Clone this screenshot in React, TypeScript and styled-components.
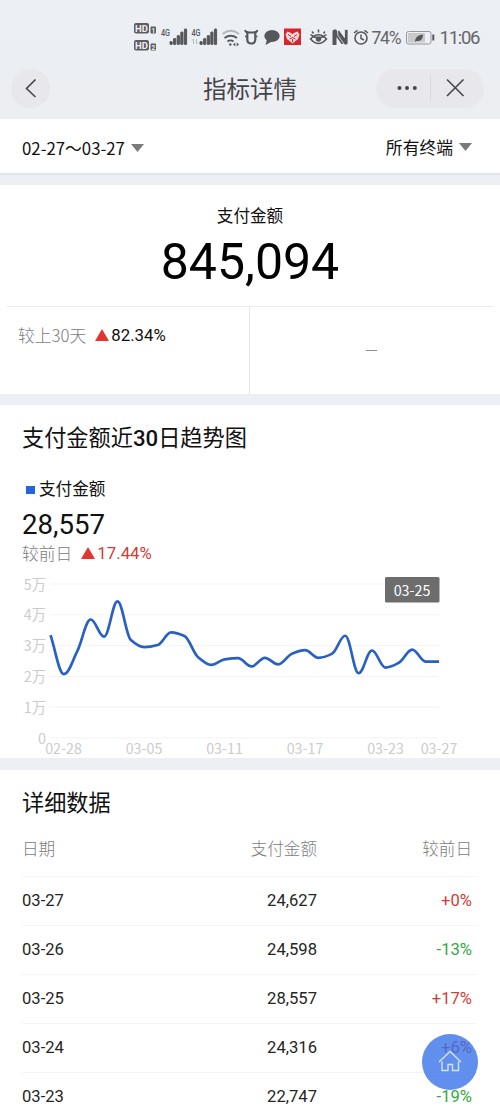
import React from 'react';
import styled, { createGlobalStyle } from 'styled-components';

const Global = createGlobalStyle`
  * { box-sizing: border-box; }
  body { margin: 0; background: #fff; }
`;
const Page = styled.main`
  width: 500px;
  height: 1111px;
  overflow: hidden;
  background: #eeeff4;
  color: #111;
  font-family: Roboto, "Noto Sans CJK SC", sans-serif;
  font-size: 16.6px;
`;
const Header = styled.header`
  height: 119px;
  background: linear-gradient(#eceff3, #ebeef2 60%, #edeef2);
`;
const StatusBar = styled.div`
  height: 59px;
  padding: 17px 0 0 132px;
`;
const StatusIcons = styled.svg`
  display: block;
  width: 368px;
  height: 40px;
  font-family: Roboto, sans-serif;
`;
const NavBar = styled.div`
  height: 59px;
  display: grid;
  grid-template-columns: 1fr 160px 1fr;
  align-items: center;
  padding: 0 16px 0 11px;
`;
const BackButton = styled.button`
  width: 39px;
  height: 39px;
  padding: 0;
  border: 0;
  border-radius: 50%;
  background: #e8e7ec;
  display: grid;
  place-items: center;
`;
const Title = styled.h1`
  margin: 0 -5px 0 0;
  padding-top: 2px;
  text-align: center;
  color: #444548;
  font-size: 23.5px;
  font-weight: 400;
  line-height: 34px;
`;
const Capsule = styled.div`
  justify-self: end;
  width: 108px;
  height: 39px;
  border-radius: 20px;
  background: #e8e7ec;
  svg { display: block; }
`;
const Filters = styled.div`
  height: 56px;
  display: flex;
  justify-content: space-between;
  padding: 16px 28px 0 22px;
  background: #fff;
  border-bottom: 2px solid #e3e4e8;
`;
const Filter = styled.div<{ $drop?: number }>`
  height: 24px;
  display: flex;
  align-items: center;
  gap: 6px;
  font-family: "Noto Sans CJK SC", sans-serif;
  font-size: 16.8px;
  line-height: 24px;
  margin-top: ${p => p.$drop ?? 0}px;
`;
const Panel = styled.section<{ $height?: number; $top: number }>`
  height: ${p => (p.$height ? `${p.$height}px` : 'auto')};
  margin-top: ${p => p.$top}px;
  background: #fff;
`;
const TotalLabel = styled.div`
  padding-top: 20px;
  line-height: 24px;
  text-align: center;
`;
const Total = styled.div`
  height: 77px;
  line-height: 66px;
  font-size: 50px;
  text-align: center;
  color: #000;
`;
const CompareGrid = styled.div`
  height: 88px;
  margin: 0 7px;
  border-top: 1px solid #ebebed;
  display: grid;
  grid-template-columns: 243px 1fr;
`;
const CompareCell = styled.div<{ $center?: boolean }>`
  display: flex;
  justify-content: ${p => (p.$center ? 'center' : 'flex-start')};
  align-items: ${p => (p.$center ? 'center' : 'flex-start')};
  padding: ${p => (p.$center ? '0' : '17px 0 0 11px')};
  border-right: ${p => (p.$center ? '0' : '1px solid #e6e6e9')};
`;
const Change = styled.div<{ $tone: string }>`
  display: flex;
  align-items: center;
  line-height: 23px;
  font-size: 16.8px;
  color: ${p => p.$tone};
  svg { margin: -2px 2px 0 9px; }
`;
const Muted = styled.span`
  color: #7c7c7c;
  font-weight: 300;
  font-family: "Noto Sans CJK SC", sans-serif;
`;
const Dash = styled.span`
  width: 11px;
  height: 1px;
  background: #8d8d8d;
`;
const SectionTitle = styled.h2`
  margin: 0;
  padding: 17px 22px 0;
  line-height: 32px;
  font-size: 22.2px;
  font-weight: 400;
  b { font-weight: 500; }
`;
const Legend = styled.div`
  display: flex;
  align-items: center;
  gap: 4px;
  padding: 24px 0 0 26px;
  line-height: 24px;
`;
const Swatch = styled.i`
  width: 9px;
  height: 8px;
  background: #2364d8;
`;
const Value = styled.div`
  padding: 6px 22px 1px;
  font-size: 27.6px;
  line-height: 33px;
`;
const DayChange = styled.div`
  padding: 0 22px;
`;
const Chart = styled.svg`
  display: block;
  width: 500px;
  height: 188px;
  margin-top: 5px;
  font-family: "Noto Sans CJK SC", sans-serif;
  font-size: 14.3px;
`;
const Table = styled.div`
  padding: 18px 23px 0 22px;
`;
const Row = styled.div<{ $head?: boolean }>`
  height: ${p => (p.$head ? 40 : 49)}px;
  padding: ${p => (p.$head ? '0 5px 0 0' : '0 5px 1px 0')};
  display: grid;
  grid-template-columns: 150px 145px 1fr;
  align-items: ${p => (p.$head ? 'start' : 'center')};
  border-bottom: 1px solid #f5f5f6;
  color: ${p => (p.$head ? '#7c7c7c' : '#252525')};
  font-weight: ${p => (p.$head ? 300 : 400)};
  line-height: 25px;
`;
const Cell = styled.span<{ $tone?: string }>`
  text-align: right;
  color: ${p => p.$tone ?? 'inherit'};
  &:first-child { text-align: left; }
`;
const HomeButton = styled.button`
  position: fixed;
  left: 422px;
  top: 1034px;
  width: 56px;
  height: 56px;
  border: 0;
  border-radius: 50%;
  padding: 0;
  background: rgba(54, 113, 232, 0.79);
  svg { display: block; }
`;

const RED = '#d23b38';
const GREEN = '#36a843';

const rows = [
  ['03-27', '24,627', '+0%'],
  ['03-26', '24,598', '-13%'],
  ['03-25', '28,557', '+17%'],
  ['03-24', '24,316', '+6%'],
  ['03-23', '22,747', '-19%'],
];

const series = [
  33500, 20800, 28300, 38600, 33000, 44500, 31900, 29600, 30300, 34400, 33200, 26400, 23800, 25600, 26000,
  23300, 26100, 24000, 27400, 28600, 26100, 27400, 33300, 21100, 28500, 22950, 24500, 28800, 24900, 24900,
];

/* Monotone cubic interpolation keeps every peak on its own data point. */
function smoothPath(values: number[]) {
  const step = 388.5 / (values.length - 1);
  const pts = values.map((v, i) => [50.5 + i * step, 738 - (v / 10000) * 30.7]);
  const slopes = pts.slice(1).map((p, i) => (p[1] - pts[i][1]) / step);
  const tangents = pts.map((_, i) => {
    if (i === 0) return slopes[0];
    if (i === pts.length - 1) return slopes[i - 1];
    const a = slopes[i - 1];
    const b = slopes[i];
    return a * b <= 0 ? 0 : (2 * a * b) / (a + b);
  });
  let d = `M${pts[0][0]} ${pts[0][1]}`;
  for (let i = 1; i < pts.length; i++) {
    const k = step / 2.7;
    d += `C${pts[i - 1][0] + k} ${pts[i - 1][1] + tangents[i - 1] * k} ${pts[i][0] - k} ${pts[i][1] - tangents[i] * k} ${pts[i][0]} ${pts[i][1]}`;
  }
  return d;
}

const Down = () => (
  <svg width="13" height="8" viewBox="0 0 13 8"><path d="M0 0h13L6.5 8z" fill="#7a7a7a" /></svg>
);
const Up = () => (
  <svg width="14" height="12" viewBox="0 0 14 12"><path d="M7 0l7 12H0z" fill="#e43630" /></svg>
);

function Signal({ x }: { x: number }) {
  return (
    <g transform={`translate(${x} 0)`} fill="#56575b">
      {[3, 6, 9, 12.5, 15.5].map((h, i) => <rect key={i} x={i * 3.6} y={44.5 - h} width="2.2" height={h} rx=".5" />)}
    </g>
  );
}

function Status() {
  return (
    <StatusIcons viewBox="132 17 368 40" fill="none" stroke="#56575b">
      {[[23, '1'], [40, '2']].map(([y, n]) => (
        <g key={n} stroke="none">
          <rect x="134" y={y} width="15" height="10.5" rx="2" fill="#5c5d61" />
          <text x="141.5" y={+y + 8.6} fontSize="9.5" fontWeight="700" textAnchor="middle" fill="#eef0f3">HD</text>
          <rect x="150.5" y={+y + 3.5} width="5.5" height="7" rx="1" fill="#5c5d61" />
          <text x="153.3" y={+y + 9.5} fontSize="6.5" fontWeight="700" textAnchor="middle" fill="#eef0f3">{n}</text>
        </g>
      ))}
      <g stroke="none" fill="#56575b" fontSize="8.5" fontWeight="500">
        <text x="161" y="36" textLength="9" lengthAdjust="spacingAndGlyphs">4G</text>
        <text x="191.5" y="36" textLength="9" lengthAdjust="spacingAndGlyphs">4G</text>
      </g>
      <Signal x={170} />
      <Signal x={200} />
      <path d="M193.500 44v-5l-1.500 1.500M196.500 39v5l1.500-1.500" stroke="#b9bbc0" />
      <g strokeWidth="1.900">
        <path d="M222.500 34q8.300-6.500 16.500 0" stroke="#b5b7bb" />
        <path d="M224.500 38q6.200-4.500 12.500 0M227.500 41.500q3-2.200 6 0" />
        <circle cx="230.300" cy="44.500" r="1.200" fill="#56575b" stroke="none" />
        <path d="M233 44.500l2.300-2v4zM239 44.500l-2.300-2v4z" fill="#56575b" stroke="none" />
      </g>
      <path d="M248.500 32q-3 .5-3.500-2M254 32q3 .5 3.500-2" strokeWidth="1.800" />
      <path d="M247.300 32.500h8v7q0 4-4 4t-4-4z" strokeWidth="2.200" />
      <path d="M245 36.500h2M255.500 36.500h2" strokeWidth="1.500" />
      <ellipse cx="272" cy="36" rx="7.700" ry="6" fill="#56575b" stroke="none" />
      <path d="M267 39.500l-1.500 5.500 6.500-3.500z" fill="#56575b" stroke="none" />
      <rect x="284" y="28.500" width="17" height="16.500" fill="#d9232d" stroke="none" />
      <path d="M285.500 34.500l2-3 2.500 1 2.500 1.500 2.500-1.500 2.500-1 2 3-1.500 4.500-5.500 4.500-5.500-4.500z" fill="#f6d9da" stroke="none" />
      <path d="M288 34.500l3 2M297 34.500l-3 2M289.500 39l3-1.500 3 1.500M292.500 39v3" stroke="#d9232d" />
      <path d="M310.500 34.500q8 7 16 0M310.500 39q8-8.500 16 0-8 9-16 0zM313.500 33.500l-1.500-2M318.500 32.500v-3M323.500 33.500l1.500-2" strokeWidth="1.500" />
      <circle cx="318.500" cy="39" r="2.700" fill="#56575b" stroke="none" />
      <g fill="#56575b" stroke="none">
        <path d="M332.500 31.500q0-2 2-2h1.500l7.500 10v4.500h-2l-5-7v8h-4z" />
        <path d="M348 43q0 2-2 2h-1.300l-7-10v-4.500h1.800l5 7v-8h3.500z" stroke="#eceff3" strokeWidth=".8" />
      </g>
      <circle cx="361" cy="38" r="6" strokeWidth="1.600" />
      <path d="M361 34.500V38.500l3 1.500M354 33l3.500-2.700M368 33l-3.500-2.700" strokeWidth="1.500" />
      <text x="371.500" y="43.800" fontSize="17.500" stroke="none" fill="#65666a" textLength="30">74%</text>
      <rect x="406.500" y="31.500" width="24.500" height="12.500" rx="2" stroke="#96989c" />
      <rect x="408" y="33" width="17" height="9.500" fill="#c8cace" stroke="none" />
      <path d="M433.300 34.500v6" strokeWidth="2" />
      <path d="M415 42q-.5-6.500 8-7.500 0 7.500-6.500 6.500z" fill="#56575b" stroke="none" />
      <text x="439.500" y="43.800" fontSize="18.500" stroke="none" fill="#65666a" textLength="41">11:06</text>
    </StatusIcons>
  );
}

export default function App() {
  return (
    <Page>
      <Global />
      <Header>
        <StatusBar><Status /></StatusBar>
        <NavBar>
          <BackButton>
            <svg width="39" height="39" fill="none" stroke="#454649" strokeWidth="1.600"><path d="M24.500 10.500L15.500 19.500 24.500 28" /></svg>
          </BackButton>
          <Title>指标详情</Title>
          <Capsule>
            <svg width="108" height="39" fill="none" stroke="#454649" strokeWidth="1.600">
              <g fill="#454649" stroke="none"><circle cx="23.500" cy="19" r="2" /><circle cx="31" cy="19" r="2" /><circle cx="38.800" cy="19" r="2" /></g>
              <path d="M54.500 6v27" stroke="#d9d9df" strokeWidth="1" />
              <path d="M71 10.500L87.500 27M87.500 10.500L71 27" />
            </svg>
          </Capsule>
        </NavBar>
      </Header>
      <Filters>
        <Filter $drop={1}><span>02-27～03-27</span><Down /></Filter>
        <Filter><span>所有终端</span><Down /></Filter>
      </Filters>
      <Panel $height={209} $top={10}>
        <TotalLabel>支付金额</TotalLabel>
        <Total>845,094</Total>
        <CompareGrid>
          <CompareCell>
            <Change $tone="#111"><Muted>较上30天</Muted><Up />82.34%</Change>
          </CompareCell>
          <CompareCell $center><Dash /></CompareCell>
        </CompareGrid>
      </Panel>
      <Panel $height={353} $top={11}>
        <SectionTitle>支付金额近<b>30</b>日趋势图</SectionTitle>
        <Legend><Swatch />支付金额</Legend>
        <Value>28,557</Value>
        <DayChange><Change $tone={RED}><Muted>较前日</Muted><Up />17.44%</Change></DayChange>
        <Chart viewBox="0 570 500 188">
          {[0, 1, 2, 3, 4, 5].map(n => {
            const y = 738 - n * 30.8;
            return (
              <g key={n}>
                <path d={`M50 ${y}H439`} stroke="#f3f3f4" />
                <text x="46" y={y + 5.5} textAnchor="end" fill="#ccc">{n === 0 ? '0' : `${n}万`}</text>
              </g>
            );
          })}
          <path d={smoothPath(series)} fill="none" stroke="#2860c4" strokeWidth="2.700" />
          {[[63.5, '02-28'], [144, '03-05'], [224.5, '03-11'], [305, '03-17'], [385.5, '03-23'], [439, '03-27']].map(([x, label]) => (
            <text key={label} x={x} y="754" textAnchor="middle" fill="#ccc">{label}</text>
          ))}
          <rect x="385" y="577" width="54.500" height="25.500" rx="1.500" fill="#6d6d6d" />
          <text x="412" y="596" textAnchor="middle" fill="#fff">03-25</text>
        </Chart>
      </Panel>
      <Panel $top={12}>
        <SectionTitle>详细数据</SectionTitle>
        <Table>
          <Row $head><Cell>日期</Cell><Cell>支付金额</Cell><Cell>较前日</Cell></Row>
          {rows.map(([date, amount, change]) => (
            <Row key={date}>
              <Cell>{date}</Cell>
              <Cell>{amount}</Cell>
              <Cell $tone={change.startsWith('+') ? RED : GREEN}>{change}</Cell>
            </Row>
          ))}
        </Table>
      </Panel>
      <HomeButton>
        <svg width="56" height="56" fill="none" stroke="#d5e2fc" strokeWidth="1.400">
          <path d="M17 28L28 17.500 39 28M20 27.500V36.500H26V30.500H30.500V36.500H36.500V27.500" />
        </svg>
      </HomeButton>
    </Page>
  );
}
